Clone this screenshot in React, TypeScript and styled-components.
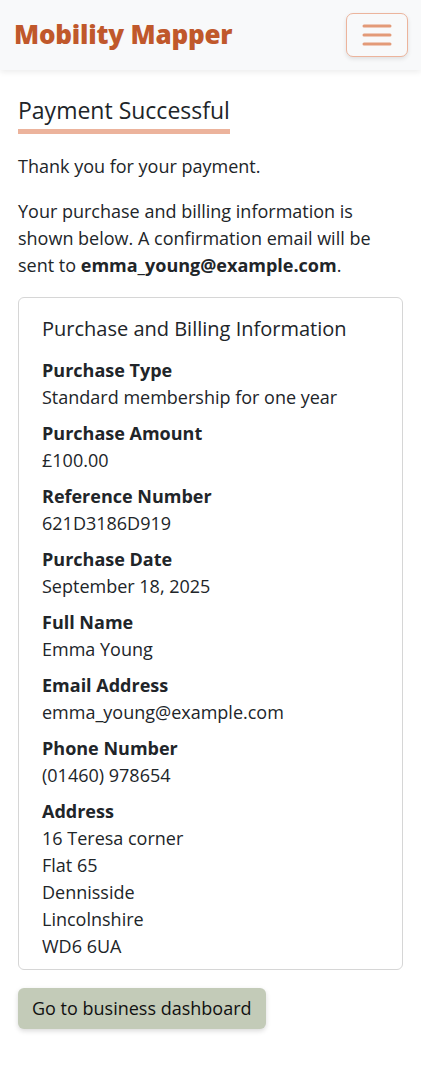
import React from "react";
import styled, { createGlobalStyle } from "styled-components";

const Global = createGlobalStyle`
  html, body { margin: 0; padding: 0; background: #fff; }
  body {
    font-family: "Open Sans", "Noto Sans", sans-serif;
    font-size: 18px;
    line-height: 27px;
    color: #212529;
  }
  * { box-sizing: border-box; }
`;

const Header = styled.header`
  height: 70px;
  background: #f8f9fa;
  box-shadow: 0 2px 6px rgba(0, 0, 0, 0.08);
  display: flex;
  align-items: center;
  justify-content: space-between;
  padding: 0 13px 0 14px;
`;

const Brand = styled.div`
  font-size: 26px;
  font-weight: 800;
  color: #c0582b;
  line-height: 1.2;
  letter-spacing: -0.2px;
`;

const MenuButton = styled.button`
  width: 62px;
  height: 44px;
  border: 1.5px solid #ecb49c;
  border-radius: 7px;
  background: #f8f9fa;
  box-shadow: 0 2px 4px rgba(0, 0, 0, 0.1);
  display: flex;
  align-items: center;
  justify-content: center;
  padding: 0;
`;

const Main = styled.main`
  padding: 26px 18px 40px;
`;

const Title = styled.h1`
  display: inline-block;
  margin: 0 0 19px;
  font-size: 23px;
  font-weight: 400;
  line-height: 28px;
  padding-bottom: 5px;
  border-bottom: 5px solid #ecb39c;
`;

const Para = styled.p`
  margin: 0 0 18px;
`;

const Card = styled.section`
  border: 1px solid #d6d6d6;
  border-radius: 6px;
  padding: 19px 23px 0;
  margin-bottom: 18px;
`;

const CardTitle = styled.h2`
  margin: 0 0 16px;
  font-size: 20px;
  font-weight: 400;
  line-height: 24px;
`;

const Item = styled.div`
  margin-bottom: 9px;
`;

const Label = styled.div`
  font-weight: 700;
`;

const Value = styled.div``;

const ActionButton = styled.button`
  font-family: inherit;
  font-size: 18px;
  line-height: 27px;
  color: #111;
  background: #c3cbb8;
  border: none;
  border-radius: 6px;
  padding: 7px 14px;
  box-shadow: 0 2px 5px rgba(0, 0, 0, 0.15);
`;

const items: { label: string; value: string[] }[] = [
  { label: "Purchase Type", value: ["Standard membership for one year"] },
  { label: "Purchase Amount", value: ["£100.00"] },
  { label: "Reference Number", value: ["621D3186D919"] },
  { label: "Purchase Date", value: ["September 18, 2025"] },
  { label: "Full Name", value: ["Emma Young"] },
  { label: "Email Address", value: ["emma_young@example.com"] },
  { label: "Phone Number", value: ["(01460) 978654"] },
  {
    label: "Address",
    value: ["16 Teresa corner", "Flat 65", "Dennisside", "Lincolnshire", "WD6 6UA"],
  },
];

export default function App() {
  return (
    <>
      <Global />
      <Header>
        <Brand>Mobility Mapper</Brand>
        <MenuButton aria-label="Menu">
          <svg width="30" height="24" viewBox="0 0 30 24">
            <g stroke="#e39a78" strokeWidth="3" strokeLinecap="round">
              <line x1="2" y1="3" x2="28" y2="3" />
              <line x1="2" y1="12" x2="28" y2="12" />
              <line x1="2" y1="21" x2="28" y2="21" />
            </g>
          </svg>
        </MenuButton>
      </Header>
      <Main>
        <Title>Payment Successful</Title>
        <Para>Thank you for your payment.</Para>
        <Para>
          Your purchase and billing information is shown below. A confirmation
          email will be sent to <strong>emma_young@example.com</strong>.
        </Para>
        <Card>
          <CardTitle>Purchase and Billing Information</CardTitle>
          {items.map((it) => (
            <Item key={it.label}>
              <Label>{it.label}</Label>
              {it.value.map((v) => (
                <Value key={v}>{v}</Value>
              ))}
            </Item>
          ))}
        </Card>
        <ActionButton>Go to business dashboard</ActionButton>
      </Main>
    </>
  );
}
